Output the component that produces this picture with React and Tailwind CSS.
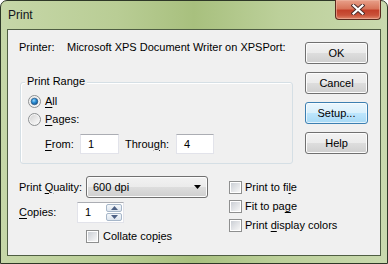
import React from "react";

const font = { fontFamily: '"Liberation Sans", Arial, sans-serif' };

function U({ children }) {
  return <span className="underline underline-offset-[2px] decoration-[1px]">{children}</span>;
}

function Radio({ checked }) {
  return (
    <svg width="13" height="13" viewBox="0 0 13 13" className="shrink-0">
      <defs>
        <linearGradient id={checked ? "rgc" : "rgu"} x1="0" y1="0" x2="1" y2="1">
          <stop offset="0" stopColor="#d4d4d4" />
          <stop offset="1" stopColor="#fbfbfb" />
        </linearGradient>
        <radialGradient id="dot" cx="0.4" cy="0.35" r="0.7">
          <stop offset="0" stopColor="#9ad6f9" />
          <stop offset="0.45" stopColor="#2b8fd6" />
          <stop offset="1" stopColor="#164f85" />
        </radialGradient>
      </defs>
      <circle cx="6.5" cy="6.5" r="6" fill="#f4f4f4" stroke="#8c8f91" strokeWidth="1" />
      <circle cx="6.5" cy="6.5" r="4.5" fill={checked ? "url(#rgc)" : "url(#rgu)"} />
      {checked && <circle cx="6.5" cy="6.5" r="3.3" fill="url(#dot)" stroke="#1d4f7e" strokeWidth="0.6" />}
    </svg>
  );
}

function Check() {
  return (
    <div className="w-[13px] h-[13px] shrink-0 border border-[#8e8f8f] bg-white p-[1px]">
      <div className="w-full h-full bg-[linear-gradient(135deg,#cbcfd5,#f7f7f7)]" />
    </div>
  );
}

function Btn({ children, hot }) {
  return (
    <div
      className={
        "w-[63px] h-[22px] rounded-[3px] border flex items-center justify-center text-[11px] leading-none " +
        (hot
          ? "border-[#3c7fb1] bg-[linear-gradient(180deg,#eaf6fd_0%,#d9f0fc_50%,#bee6fd_51%,#a7d9f5_100%)] shadow-[inset_0_0_0_1px_#ffffffaa]"
          : "border-[#707070] bg-[linear-gradient(180deg,#f2f2f2_0%,#ebebeb_50%,#dddddd_51%,#cfcfcf_100%)] shadow-[inset_0_0_0_1px_#fcfcfc]")
      }
    >
      {children}
    </div>
  );
}

function TextBox({ value, w = "w-[39px]" }) {
  return (
    <div className={w + " shrink-0 h-[20px] bg-white border border-[#e2e3ea] border-t-[#abadb3] flex items-center pl-[7px] text-[11px]"}>
      {value}
    </div>
  );
}

export default function App() {
  return (
    <div style={font} className="text-black text-[11px] leading-[13px] whitespace-nowrap">
      <div className="w-[388px] h-[264px] flex flex-col rounded-t-[7px] border border-[#2e3827] bg-[linear-gradient(90deg,#c6d7a8_0%,#b9cd95_30%,#a8c07e_50%,#bcd09a_72%,#c9d9ae_100%)] px-[6px] pb-[7px]">
        <div className="h-[28px] flex justify-between items-center">
          <div className="pl-[1px] text-[12px] text-[#10141c]">Print</div>
          <div className="self-start -mt-[1px] w-[46px] h-[20px] rounded-b-[4px] border border-t-0 border-[#5a2a1e] bg-[linear-gradient(180deg,#e8a08a_0%,#d8755a_45%,#c3402a_55%,#c9523a_80%,#e0876a_100%)] shadow-[inset_0_0_0_1px_#f0b8a499] flex items-center justify-center">
            <svg width="14" height="11" viewBox="0 0 14 11">
              <path d="M2.5 1.5 L11.5 9.5 M11.5 1.5 L2.5 9.5" stroke="#4a2a28" strokeWidth="4" strokeLinecap="square" />
              <path d="M2.5 1.5 L11.5 9.5 M11.5 1.5 L2.5 9.5" stroke="#ffffff" strokeWidth="2.2" strokeLinecap="square" />
            </svg>
          </div>
        </div>
        <div className="flex-1 bg-[#f0f0f0] border border-[#4f5e43] flex">
          <div className="w-[297px] shrink-0 pl-[11px] flex flex-col">
            <div className="mt-[11px] h-[13px] flex">
              <div className="w-[48px] shrink-0">Printer:</div>
              <div>Microsoft XPS Document Writer on XPSPort:</div>
            </div>
            <div className="relative ml-[1px] mt-[28px] w-[273px] h-[82px] rounded-[3px] border border-[#d5dfe5] shadow-[inset_1px_1px_0_#ffffff] pl-[7px] pt-[12px] flex flex-col">
              <div className="absolute top-[-8px] left-[4px] px-[2px] bg-[#f0f0f0]">Print Range</div>
              <div className="h-[13px] flex items-center gap-[4px]">
                <Radio checked />
                <div><U>A</U>ll</div>
              </div>
              <div className="mt-[5px] h-[13px] flex items-center gap-[4px]">
                <Radio />
                <div><U>P</U>ages:</div>
              </div>
              <div className="mt-[8px] flex items-center pl-[17px]">
                <div className="w-[35px] shrink-0"><U>F</U>rom:</div>
                <TextBox value="1" />
                <div className="w-[57px] shrink-0 pl-[6px]">Throu<U>g</U>h:</div>
                <TextBox value="4" w="w-[38px]" />
              </div>
            </div>
            <div className="flex">
              <div className="w-[210px] shrink-0 flex flex-col">
                <div className="mt-[12px] h-[22px] flex items-center">
                  <div className="w-[67px] shrink-0">Print <U>Q</U>uality:</div>
                  <div className="w-[122px] h-[22px] rounded-[3px] border border-[#707070] bg-[linear-gradient(180deg,#f2f2f2_0%,#ebebeb_50%,#dddddd_51%,#cfcfcf_100%)] shadow-[inset_0_0_0_1px_#fcfcfc] flex items-center justify-between pl-[6px] pr-[6px]">
                    <span>600 dpi</span>
                    <svg width="7" height="4" viewBox="0 0 7 4">
                      <path d="M0 0 H7 L3.5 4 Z" fill="#000" />
                    </svg>
                  </div>
                </div>
                <div className="mt-[4px] h-[21px] flex items-center">
                  <div className="w-[58px] shrink-0"><U>C</U>opies:</div>
                  <div className="w-[47px] h-[21px] bg-white border border-[#e2e3ea] border-t-[#abadb3] flex items-center justify-between pl-[7px] pr-[1px]">
                    <span>1</span>
                    <div className="w-[16px] h-[17px] flex flex-col gap-[1px]">
                      <div className="flex-1 rounded-[2px] border border-[#a7b7c9] bg-[linear-gradient(180deg,#f4f7fa,#dde5ee)] flex items-center justify-center">
                        <svg width="7" height="4" viewBox="0 0 7 4"><path d="M0 4 H7 L3.5 0 Z" fill="#4d6185" /></svg>
                      </div>
                      <div className="flex-1 rounded-[2px] border border-[#a7b7c9] bg-[linear-gradient(180deg,#f4f7fa,#dde5ee)] flex items-center justify-center">
                        <svg width="7" height="4" viewBox="0 0 7 4"><path d="M0 0 H7 L3.5 4 Z" fill="#4d6185" /></svg>
                      </div>
                    </div>
                  </div>
                </div>
                <div className="mt-[7px] pl-[67px] h-[13px] flex items-center gap-[4px]">
                  <Check />
                  <div>Collate cop<U>i</U>es</div>
                </div>
              </div>
              <div className="mt-[14px] shrink-0 flex flex-col">
                <div className="h-[19px] flex items-center gap-[3px]">
                  <Check />
                  <div>Print to fi<U>l</U>e</div>
                </div>
                <div className="h-[19px] flex items-center gap-[3px]">
                  <Check />
                  <div>Fit to pa<U>g</U>e</div>
                </div>
                <div className="h-[19px] flex items-center gap-[3px]">
                  <Check />
                  <div>Print <U>d</U>isplay colors</div>
                </div>
              </div>
            </div>
          </div>
          <div className="pt-[12px] flex flex-col gap-[8px]">
            <Btn>OK</Btn>
            <Btn>Cancel</Btn>
            <Btn hot>Setup...</Btn>
            <Btn>Help</Btn>
          </div>
        </div>
      </div>
    </div>
  );
}
